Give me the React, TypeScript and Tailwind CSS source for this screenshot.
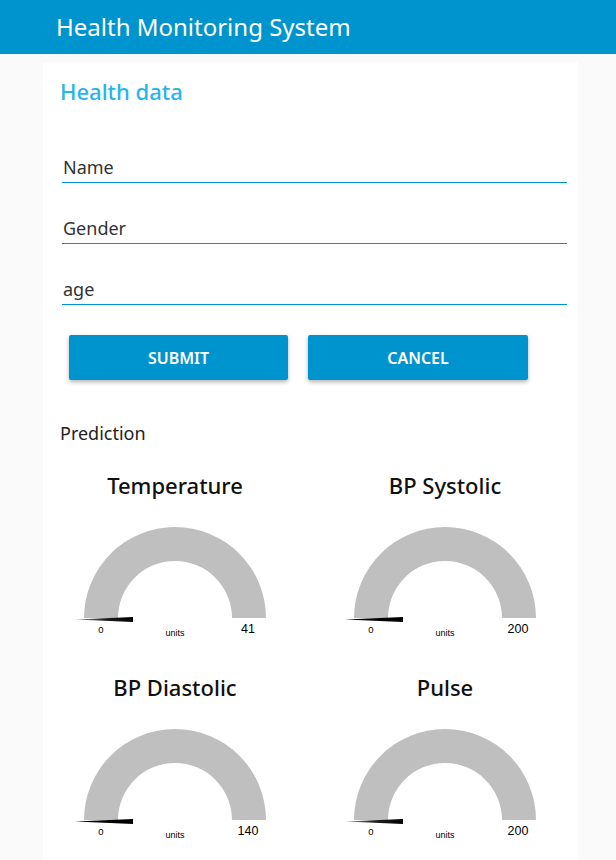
const fields = ["Name", "Gender", "age"];

const gauges = [
  { title: "Temperature", max: "41" },
  { title: "BP Systolic", max: "200" },
  { title: "BP Diastolic", max: "140" },
  { title: "Pulse", max: "200" },
];

function Gauge({ title, max }: { title: string; max: string }) {
  return (
    <div className="flex h-[202px] w-[230px] flex-col items-center">
      <div className="h-[30px] text-[22px] font-medium leading-[26px] text-[#111]">{title}</div>
      <svg width="230" height="172" viewBox="0 0 230 172">
        <defs>
          <linearGradient id={`needle-${title}`} x1="0" x2="1" y1="0" y2="0">
            <stop offset="0" stopColor="#999" />
            <stop offset="0.5" stopColor="#222" />
            <stop offset="1" stopColor="#000" />
          </linearGradient>
        </defs>
        <path d="M24 116 A91 91 0 0 1 206 116 L172 116 A57 57 0 0 0 58 116 Z" fill="#bfbfbf" />
        <polygon points="15,117.5 73,115 73,120" fill={`url(#needle-${title})`} />
        <g fontFamily="'Liberation Sans', Arial, sans-serif" fill="#000">
          <text x="41" y="131" fontSize="9.5" textAnchor="middle">0</text>
          <text x="115" y="134" fontSize="9" textAnchor="middle">units</text>
          <text x="188" y="131" fontSize="12.5" textAnchor="middle">{max}</text>
        </g>
      </svg>
    </div>
  );
}

export default function App() {
  return (
    <div className="min-h-screen w-[616px] bg-[#fafafa] font-['Noto_Sans',sans-serif]">
      <header className="flex h-[54px] items-center bg-[#0094ce] pl-[56px] text-[24px] text-white">
        Health Monitoring System
      </header>

      <main className="pt-[8px]">
        <div className="ml-[43px] min-h-[806px] w-[535px] bg-white">
          <h2 className="pb-[2px] pl-[17px] pt-[16px] text-[22px] font-medium leading-[26px] text-[#2ab4ec]">
            Health data
          </h2>

          <div className="pl-[19px] pr-[11px] pt-[16px]">
            {fields.map((label) => (
              <div
                key={label}
                className="mt-[33px] border-b border-[#0094ce] pb-[3px] pl-[1px] text-[18px] leading-[24px] text-[#333]"
              >
                {label}
              </div>
            ))}
          </div>

          <div className="mt-[30px] flex gap-[20px] pl-[26px]">
            <button className="h-[45px] w-[219px] rounded-[2px] bg-[#0094ce] text-[16px] font-semibold text-white shadow-[0_2px_4px_rgba(0,0,0,0.3)]">
              SUBMIT
            </button>
            <button className="h-[45px] w-[220px] rounded-[2px] bg-[#0094ce] text-[16px] font-semibold text-white shadow-[0_2px_4px_rgba(0,0,0,0.3)]">
              CANCEL
            </button>
          </div>

          <div className="mt-[41px] pl-[17px] text-[18px] leading-[24px] text-[#222]">Prediction</div>

          <div className="mt-[27px] grid grid-cols-[230px_230px] gap-x-[40px] pl-[17px]">
            {gauges.map((g) => (
              <Gauge key={g.title} title={g.title} max={g.max} />
            ))}
          </div>
        </div>
      </main>
    </div>
  );
}
